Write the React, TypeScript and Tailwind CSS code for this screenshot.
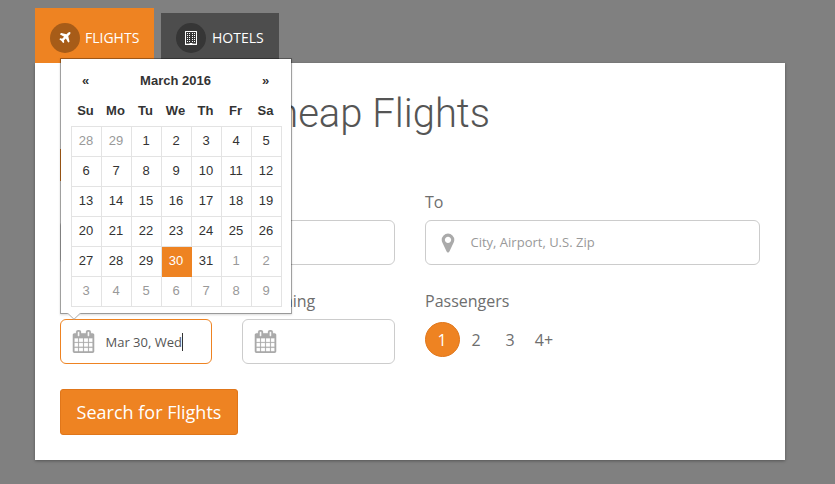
import React from "react";

const days = [
  28, 29, 1, 2, 3, 4, 5, 6, 7, 8, 9, 10, 11, 12, 13, 14, 15, 16, 17, 18, 19, 20,
  21, 22, 23, 24, 25, 26, 27, 28, 29, 30, 31, 1, 2, 3, 4, 5, 6, 7, 8, 9,
];
const weekdays = ["Su", "Mo", "Tu", "We", "Th", "Fr", "Sa"];

function PlaneIcon() {
  return (
    <svg viewBox="0 0 1792 1792" className="h-[14px] w-[14px]" fill="currentColor">
      <path d="M1568 160q44 52 12 148t-108 172l-161 161 160 696q5 19-12 33l-128 96q-7 6-19 6-4 0-7-1-15-3-21-16l-279-508-259 259 53 194q5 17-8 31l-96 96q-9 9-23 9h-2q-15-2-24-13l-189-252-252-189q-11-7-13-23-1-13 9-25l96-97q9-9 23-9 6 0 8 1l194 53 259-259-508-279q-14-8-17-24-2-16 9-27l128-128q14-13 30-8l665 159 160-160q76-76 172-108t148 12z" />
    </svg>
  );
}

function BuildingIcon() {
  const rows = [2, 4, 6, 8, 10];
  const cols = [2, 4, 7, 9];
  return (
    <svg viewBox="0 0 12 14" className="h-[14px] w-[12px]" fill="currentColor">
      <path d="M.5 0h11q.5 0 .5.5v13q0 .5-.5.5H.5q-.5 0-.5-.5V.5Q0 0 .5 0zM1 1v12h3.5v-1h3v1H11V1z" fillRule="evenodd" />
      <path d="M1 12h3.5v1H1zM7.5 12H11v1H7.5z" opacity="0.35" />
      {rows.map((y) => cols.map((x) => <rect key={`${x}-${y}`} x={x} y={y} width="1" height="1" />))}
    </svg>
  );
}

function CalendarIcon() {
  return (
    <svg viewBox="0 0 1792 1792" className="h-[23px] w-[23px] shrink-0 text-[#aaa]" fill="currentColor" stroke="currentColor" strokeWidth="14">
      <path d="M192 1664h288v-288h-288v288zm352 0h320v-288h-320v288zm-352-352h288v-320h-288v320zm352 0h320v-320h-320v320zm-352-384h288v-288h-288v288zm736 736h320v-288h-320v288zm-384-736h320v-288h-320v288zm768 736h288v-288h-288v288zm-384-352h320v-320h-320v320zm-352-864v-288q0-13-9.5-22.5t-22.5-9.5h-64q-13 0-22.5 9.5t-9.5 22.5v288q0 13 9.5 22.5t22.5 9.5h64q13 0 22.5-9.5t9.5-22.5zm736 864h288v-320h-288v320zm-384-384h320v-288h-320v288zm384 0h288v-288h-288v288zm32-480v-288q0-13-9.5-22.5t-22.5-9.5h-64q-13 0-22.5 9.5t-9.5 22.5v288q0 13 9.5 22.5t22.5 9.5h64q13 0 22.5-9.5t9.5-22.5zm384-64v1280q0 52-38 90t-90 38h-1408q-52 0-90-38t-38-90v-1280q0-52 38-90t90-38h128v-96q0-66 47-113t113-47h64q66 0 113 47t47 113v96h384v-96q0-66 47-113t113-47h64q66 0 113 47t47 113v96h128q52 0 90 38t38 90z" />
    </svg>
  );
}

function MarkerIcon() {
  return (
    <svg viewBox="0 0 1792 1792" className="h-[22px] w-[22px] shrink-0 text-[#aaa]" fill="currentColor">
      <path d="M1152 640q0-106-75-181t-181-75-181 75-75 181 75 181 181 75 181-75 75-181zm256 0q0 109-33 179l-364 774q-16 33-47.5 52t-67.5 19-67.5-19-46.5-52l-365-774q-33-70-33-179 0-212 150-362t362-150 362 150 150 362z" />
    </svg>
  );
}

function DatePicker() {
  return (
    <div className="absolute left-[60px] top-[58px] h-[256px] w-[232px] border border-black/30 bg-white bg-clip-padding px-[10px] pt-[7px] font-['Liberation_Sans',Arial,sans-serif] text-[13px] text-[#333] shadow-[0_1px_2px_rgba(0,0,0,0.15)]">
      <div className="-ml-[0.5px] flex h-[30px] items-center text-center font-bold leading-[30px]">
        <span className="w-[30px]">«</span>
        <span className="w-[150px]">March 2016</span>
        <span className="w-[30px]">»</span>
      </div>
      <div className="-ml-[0.5px] grid h-[30px] grid-cols-[repeat(7,30px)] text-center font-bold leading-[30px]">
        {weekdays.map((d) => (
          <span key={d}>{d}</span>
        ))}
      </div>
      <div className="grid w-[211px] grid-cols-[repeat(7,30px)] border-l border-t border-[#e3e3e3] text-center leading-[28px]">
        {days.map((d, i) => (
          <span
            key={i}
            className={
              i === 31
                ? "h-[30px] border-b border-r border-[#ee8322] bg-[#ee8322] pr-px text-white"
                : i < 2 || i > 32
                  ? "h-[30px] border-b border-r border-[#e3e3e3] pr-px text-[#999]"
                  : "h-[30px] border-b border-r border-[#e3e3e3] pr-px"
            }
          >
            {d}
          </span>
        ))}
      </div>
      <svg className="absolute left-[6px] top-[254px] h-[7px] w-[14px]" viewBox="0 0 14 7">
        <path d="M0 0h14L7 6z" fill="white" />
        <path d="M0 .5h1L7 6.3 13 .5h1" fill="none" stroke="#aaa" />
      </svg>
    </div>
  );
}

export default function App() {
  return (
    <div className="relative h-[484px] w-[835px] overflow-hidden bg-[#808080] px-[35px] pt-2 font-['Open_Sans',sans-serif] text-[#6e6e6e]">
      <div className="flex h-[55px] items-end gap-[7px] text-[14px] text-white">
        <div className="flex h-[55px] w-[119px] items-center bg-[#ee8322] pl-[15px] pt-[5px]">
          <span className="mr-[5px] flex h-[30px] w-[30px] items-center justify-center rounded-full bg-[#a75c18]">
            <PlaneIcon />
          </span>
          <span className="pb-[2px]">FLIGHTS</span>
        </div>
        <div className="flex h-[50px] w-[118px] items-center bg-[#4d4d4d] pl-[15px]">
          <span className="mr-[6px] flex h-[30px] w-[30px] items-center justify-center rounded-full bg-[#363636]">
            <BuildingIcon />
          </span>
          <span className="pb-[2px]">HOTELS</span>
        </div>
      </div>
      <main className="h-[397px] w-[750px] bg-white px-[25px] pt-[26px] shadow-[0_1px_3px_rgba(0,0,0,0.35)]">
        <h1 className="h-[60px] w-[428px] whitespace-nowrap text-right font-[Roboto,sans-serif] text-[40px] font-light leading-[50px] text-[#555]">
          Search for Cheap Flights
        </h1>
        <div className="h-[32px] w-[100px] bg-[#ee8322]" />
        <div className="mt-[8px] flex gap-[30px]">
          <div className="w-[335px]">
            <div className="h-[31px] leading-[26px]">From</div>
            <div className="h-[45px] rounded-md border border-[#ccc]" />
          </div>
          <div className="w-[335px]">
            <div className="h-[31px] leading-[26px]">To</div>
            <div className="flex h-[45px] items-center rounded-md border border-[#ccc] pl-[11px] text-[13px] text-[#999]">
              <MarkerIcon />
              <span className="ml-[11.5px]">City, Airport, U.S. Zip</span>
            </div>
          </div>
        </div>
        <div className="mt-[23px] flex gap-[30px]">
          <div className="w-[152px]">
            <div className="h-[31px] leading-[26px]">Departing</div>
            <div className="flex h-[45px] items-center rounded-md border border-[#ee8322] pl-[11px] text-[13px] text-[#555]">
              <CalendarIcon />
              <span className="ml-[10.5px] pt-[2px]">Mar 30, Wed</span>
              <span className="h-[18px] w-px bg-[#333]" />
            </div>
          </div>
          <div className="w-[153px]">
            <div className="h-[31px] leading-[26px]">Returning</div>
            <div className="flex h-[45px] items-center rounded-md border border-[#ccc] pl-[11px]">
              <CalendarIcon />
            </div>
          </div>
          <div>
            <div className="h-[34px] leading-[26px]">Passengers</div>
            <div className="flex h-[35px] items-center text-center">
              <span className="h-[35px] w-[35px] rounded-full border border-[#e0761a] bg-[#ee8322] pr-px leading-[34px] text-white">1</span>
              <span className="w-[33px] pr-px">2</span>
              <span className="w-[34px]">3</span>
              <span className="w-[35px] pr-px">4+</span>
            </div>
          </div>
        </div>
        <button className="mt-[25px] block h-[46px] w-[178px] rounded-[3px] border border-[#e0761a] bg-[#ee8322] text-[18px] text-white">
          Search for Flights
        </button>
      </main>
      <DatePicker />
    </div>
  );
}
